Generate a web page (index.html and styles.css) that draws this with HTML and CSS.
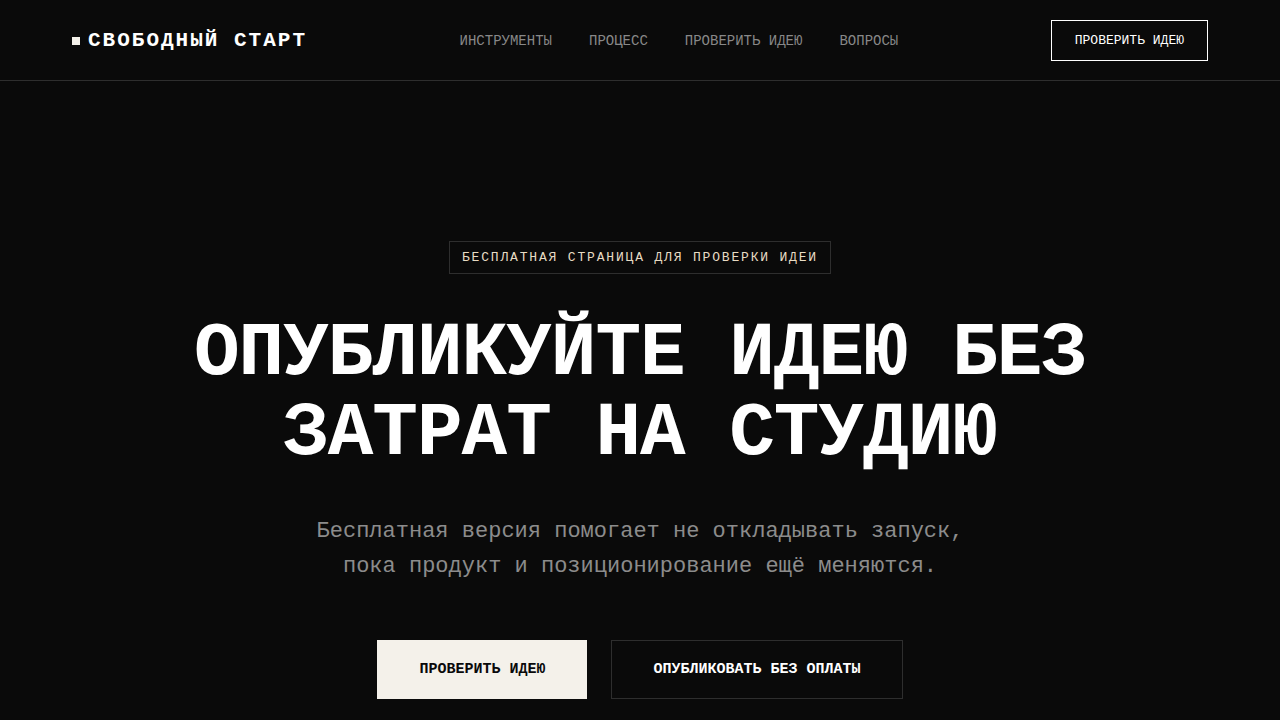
FILE: index.html
```html
<!DOCTYPE html>
<html lang="ru">
<head>
    <meta charset="UTF-8">
    <meta name="viewport" content="width=device-width, initial-scale=1.0">
    <title>Свободный старт</title>
    <link rel="stylesheet" href="styles.css">
</head>
<body>
    <header class="header">
        <a href="#" class="logo">СВОБОДНЫЙ СТАРТ</a>
        <nav class="nav">
            <a href="#tools">ИНСТРУМЕНТЫ</a>
            <a href="#process">ПРОЦЕСС</a>
            <a href="#check">ПРОВЕРИТЬ ИДЕЮ</a>
            <a href="#faq">ВОПРОСЫ</a>
        </nav>
        <button type="button" class="btn btn-small">ПРОВЕРИТЬ ИДЕЮ</button>
    </header>

    <main class="hero">
        <span class="badge">БЕСПЛАТНАЯ СТРАНИЦА ДЛЯ ПРОВЕРКИ ИДЕИ</span>
        <h1>ОПУБЛИКУЙТЕ ИДЕЮ БЕЗ ЗАТРАТ НА СТУДИЮ</h1>
        <p class="lead">Бесплатная версия помогает не откладывать запуск, пока продукт и позиционирование ещё меняются.</p>
        <div class="actions">
            <button type="button" class="btn btn-primary">ПРОВЕРИТЬ ИДЕЮ</button>
            <button type="button" class="btn btn-outline">ОПУБЛИКОВАТЬ БЕЗ ОПЛАТЫ</button>
        </div>
    </main>
</body>
</html>
```
FILE: styles.css
```css
* {
    box-sizing: border-box;
    margin: 0;
    padding: 0;
}

body {
    font-family: 'Liberation Mono', 'Courier New', monospace;
    background-color: #0a0a0a;
    color: #fff;
}

a {
    color: inherit;
    text-decoration: none;
}

/* Header */
.header {
    display: flex;
    justify-content: space-between;
    align-items: center;
    padding: 20px 72px 19px;
    border-bottom: 1px solid #2e2e2e;
}

.logo {
    display: flex;
    align-items: center;
    gap: 8px;
    font-size: 21px;
    font-weight: 700;
    line-height: 25px;
    letter-spacing: 2px;
}

.logo::before {
    content: '';
    width: 8px;
    height: 8px;
    background-color: #f4f1ea;
}

.nav {
    display: flex;
    gap: 37px;
    font-size: 14px;
    color: #888;
}

.nav a:hover {
    color: #fff;
}

/* Buttons */
.btn {
    font-family: inherit;
    font-size: 15px;
    font-weight: 700;
    line-height: 17px;
    padding: 20px 41px;
    border: 1px solid #2e2e2e;
    background-color: transparent;
    color: #fff;
    cursor: pointer;
}

.btn-small {
    font-size: 13px;
    font-weight: 400;
    padding: 11px 23px;
    border-color: #fff;
}

.btn-primary {
    background-color: #f4f1ea;
    border-color: #f4f1ea;
    color: #0a0a0a;
}

/* Hero */
.hero {
    display: flex;
    flex-direction: column;
    align-items: center;
    padding: 160px 72px 20px;
    text-align: center;
}

.badge {
    padding: 8px 12px;
    border: 1px solid #2e2e2e;
    font-size: 13px;
    line-height: 15px;
    letter-spacing: 0.14em;
    color: #e8dcc4;
}

h1 {
    max-width: 1000px;
    margin: 40px 0;
    font-size: 76px;
    line-height: 80px;
    letter-spacing: -1px;
}

.lead {
    max-width: 700px;
    margin-bottom: 56px;
    font-size: 22px;
    line-height: 35px;
    color: #8c8c8c;
}

.actions {
    display: flex;
    flex-wrap: wrap;
    justify-content: center;
    gap: 24px;
}
```
